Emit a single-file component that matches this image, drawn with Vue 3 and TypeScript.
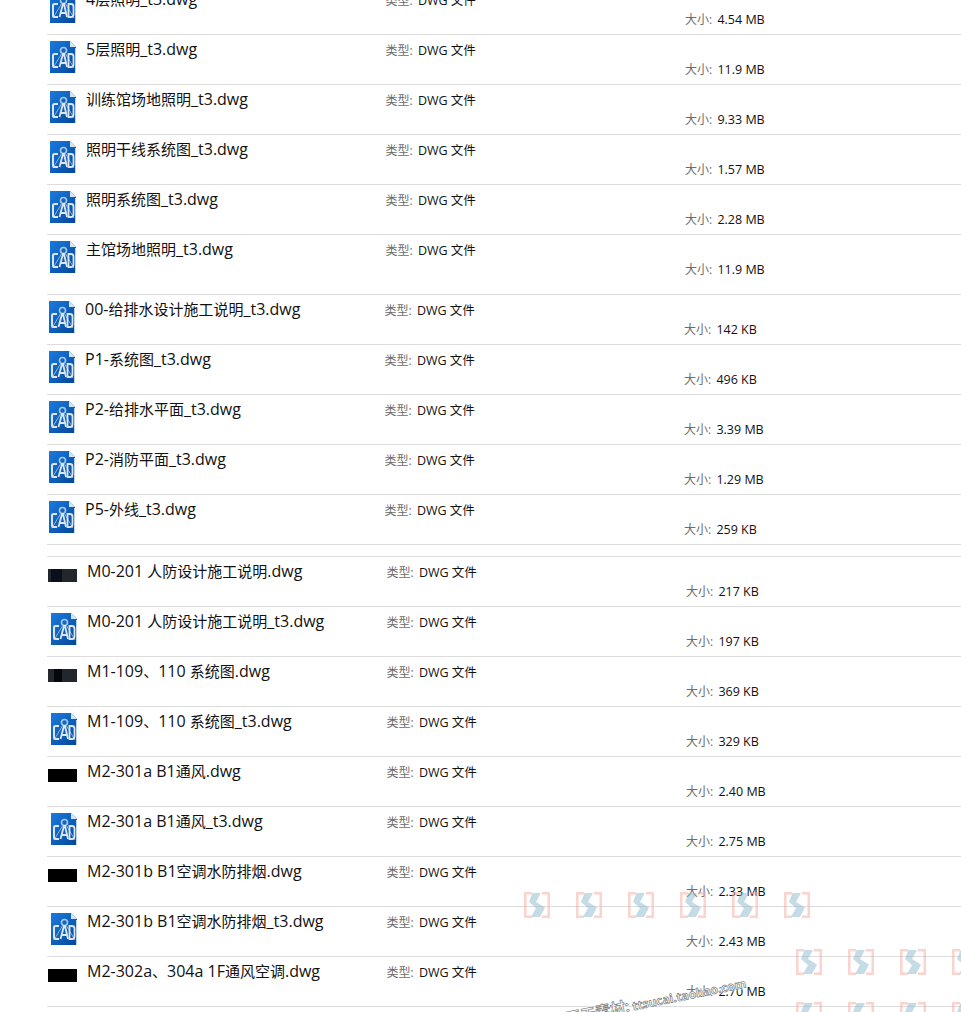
<script setup lang="ts">
interface Row { name: string; size: string; thumb?: string; tall?: boolean }
interface Group { cls: string; rows: Row[] }

const groups: Group[] = [
  { cls: 'g1', rows: [
    { name: '4层照明_t3.dwg', size: '4.54 MB' },
    { name: '5层照明_t3.dwg', size: '11.9 MB' },
    { name: '训练馆场地照明_t3.dwg', size: '9.33 MB' },
    { name: '照明干线系统图_t3.dwg', size: '1.57 MB' },
    { name: '照明系统图_t3.dwg', size: '2.28 MB' },
    { name: '主馆场地照明_t3.dwg', size: '11.9 MB', tall: true },
  ] },
  { cls: 'g2', rows: [
    { name: '00-给排水设计施工说明_t3.dwg', size: '142 KB' },
    { name: 'P1-系统图_t3.dwg', size: '496 KB' },
    { name: 'P2-给排水平面_t3.dwg', size: '3.39 MB' },
    { name: 'P2-消防平面_t3.dwg', size: '1.29 MB' },
    { name: 'P5-外线_t3.dwg', size: '259 KB' },
  ] },
  { cls: 'g3', rows: [
    { name: 'M0-201 人防设计施工说明.dwg', size: '217 KB', thumb: 'grey a' },
    { name: 'M0-201 人防设计施工说明_t3.dwg', size: '197 KB' },
    { name: 'M1-109、110 系统图.dwg', size: '369 KB', thumb: 'grey b' },
    { name: 'M1-109、110 系统图_t3.dwg', size: '329 KB' },
    { name: 'M2-301a B1通风.dwg', size: '2.40 MB', thumb: 'black' },
    { name: 'M2-301a B1通风_t3.dwg', size: '2.75 MB' },
    { name: 'M2-301b B1空调水防排烟.dwg', size: '2.33 MB', thumb: 'black' },
    { name: 'M2-301b B1空调水防排烟_t3.dwg', size: '2.43 MB' },
    { name: 'M2-302a、304a 1F通风空调.dwg', size: '2.70 MB', thumb: 'black' },
  ] },
];

const runs = (s: string): { t: string; latin: boolean }[] =>
  (s.match(/[\x00-\x7f]+|[^\x00-\x7f]+/g) ?? []).map((t) => ({ t, latin: /^[\x00-\x7f]/.test(t) }));

const marks: { x: number; y: number }[] = [
  ...[524, 576, 628, 680, 732, 784].map((x) => ({ x, y: 892 })),
  ...[796, 848, 900, 952].map((x) => ({ x, y: 949 })),
  ...[796, 848, 900, 952].map((x) => ({ x, y: 1002 })),
];
</script>

<template>
  <div class="page">
    <section v-for="g in groups" :key="g.cls" class="group" :class="g.cls">
      <div v-for="r in g.rows" :key="r.name" class="row" :class="{ tall: r.tall }">
        <div class="thumbcell">
          <div v-if="r.thumb" class="thumb" :class="r.thumb"></div>
          <svg v-else class="cad" viewBox="0 0 26 32" width="26" height="32">
            <defs>
              <linearGradient id="cadbg" x1="0" y1="0" x2="1" y2="1">
                <stop offset="0" stop-color="#1a7ade" />
                <stop offset="1" stop-color="#03479a" />
              </linearGradient>
            </defs>
            <path d="M0 0H20L26 6V32H0Z" fill="url(#cadbg)" />
            <path d="M20 0L26 6H20Z" fill="#d6e6f7" />
            <path d="M25.500 7V32" stroke="#bcd6f0" stroke-width="1" />
            <circle cx="13.500" cy="9.500" r="3" fill="none" stroke="#a9c8e6" stroke-width="1.600" />
            <path d="M3 27L12 12M24 27L15 12" stroke="#8fb4da" stroke-width="1" />
            <path d="M8 13H4.500Q3 13 3 14.500V24.500Q3 26 4.500 26H8" fill="none" stroke="#dbe6f1" stroke-width="2" />
            <path d="M9.500 26L13 13H14L17 26M10.500 22H16" fill="none" stroke="#dbe6f1" stroke-width="1.800" />
            <path d="M18.500 13V26H21Q23.500 26 23.500 23.500V15.500Q23.500 13 21 13Z" fill="none" stroke="#dbe6f1" stroke-width="1.800" />
          </svg>
        </div>
        <div class="name"><span v-for="(p, i) in runs(r.name)" :key="i" :class="{ latin: p.latin }">{{ p.t }}</span></div>
        <div class="type"><span class="lbl">类型:</span> DWG 文件</div>
        <div class="size"><span class="lbl">大小:</span> {{ r.size }}</div>
      </div>
    </section>

    <svg
      v-for="(m, i) in marks"
      :key="i"
      class="mark"
      :style="{ left: m.x + 'px', top: m.y + 'px' }"
      viewBox="0 0 26 26"
      width="26"
      height="26"
    >
      <path d="M8 1.250H1.250V24.750H8M18 1.250H24.750V24.750H18" fill="none" stroke="#f9a8a0" stroke-width="2.500" />
      <path d="M8.500 1H17L12 10L21 15.500L16 25H7L12 16L5 10Z" fill="#8db8cf" />
    </svg>
    <div class="stamp"><span class="stamp-cn">天天素材:</span> ttsucai.taobao.com</div>
  </div>
</template>

<style>
html, body { margin: 0; background: #fff; }
</style>

<style scoped>
.page {
  position: relative;
  width: 961px;
  height: 1012px;
  overflow: hidden;
  background: #fff;
  font-family: "Open Sans", "Noto Sans CJK SC", sans-serif;
  color: #111;
}
.group {
  display: flex;
  flex-direction: column;
  margin-left: 47px;
}
.g1 { margin-top: -15px; }
.g3 {
  margin-top: 11px;
  border-top: 1px solid #dcdcdc;
}
.row {
  display: grid;
  grid-template-columns: 39px 299.5px 299.5px 1fr;
  grid-template-rows: 1fr;
  height: 50px;
  box-sizing: border-box;
  border-bottom: 1px solid #dcdcdc;
}
.row.tall { height: 60px; }
.g2 .row { grid-template-columns: 38px 299.5px 299.5px 1fr; }
.g3 .row { grid-template-columns: 40px 299.5px 299.5px 1fr; }
.thumbcell { padding: 6px 0 0 3px; }
.g2 .thumbcell { padding-left: 2px; }
.g3 .thumbcell { padding-left: 4px; }
.cad { display: block; }
.thumb {
  width: 29px;
  height: 13px;
  margin: 6px 0 0 -3px;
}
.thumb.grey.a {
  background: linear-gradient(90deg, #22262d 0 3px, #0b0f1c 3px 14px, #22262d 14px);
}
.thumb.grey.b {
  background: linear-gradient(90deg, #22262d 0 6px, #06070b 6px 14px, #22262d 14px);
}
.thumb.black { background: #000; }
.name {
  font-size: 15px;
  line-height: 20px;
  padding-top: 4px;
  white-space: nowrap;
}
.latin { font-size: 16px; }
.type {
  font-size: 12.5px;
  line-height: 16px;
  padding-top: 8px;
  white-space: nowrap;
}
.size {
  font-size: 12.5px;
  line-height: 16px;
  padding-top: 27px;
  white-space: nowrap;
}
.lbl { color: #6d6d6d; font-size: 12px; margin-right: 2px; }
.mark {
  position: absolute;
  opacity: 0.5;
}
.stamp {
  position: absolute;
  left: 566px;
  top: 1007px;
  font-size: 12px;
  font-weight: 700;
  color: #fff;
  white-space: nowrap;
  -webkit-text-stroke: 0.7px #808080;
  text-shadow: 0 0 2px #fff, 0 0 2px #fff, 0 0 2px #fff;
  transform: rotate(-11.5deg);
  transform-origin: left center;
}
.stamp-cn { font-size: 15px; }
</style>
